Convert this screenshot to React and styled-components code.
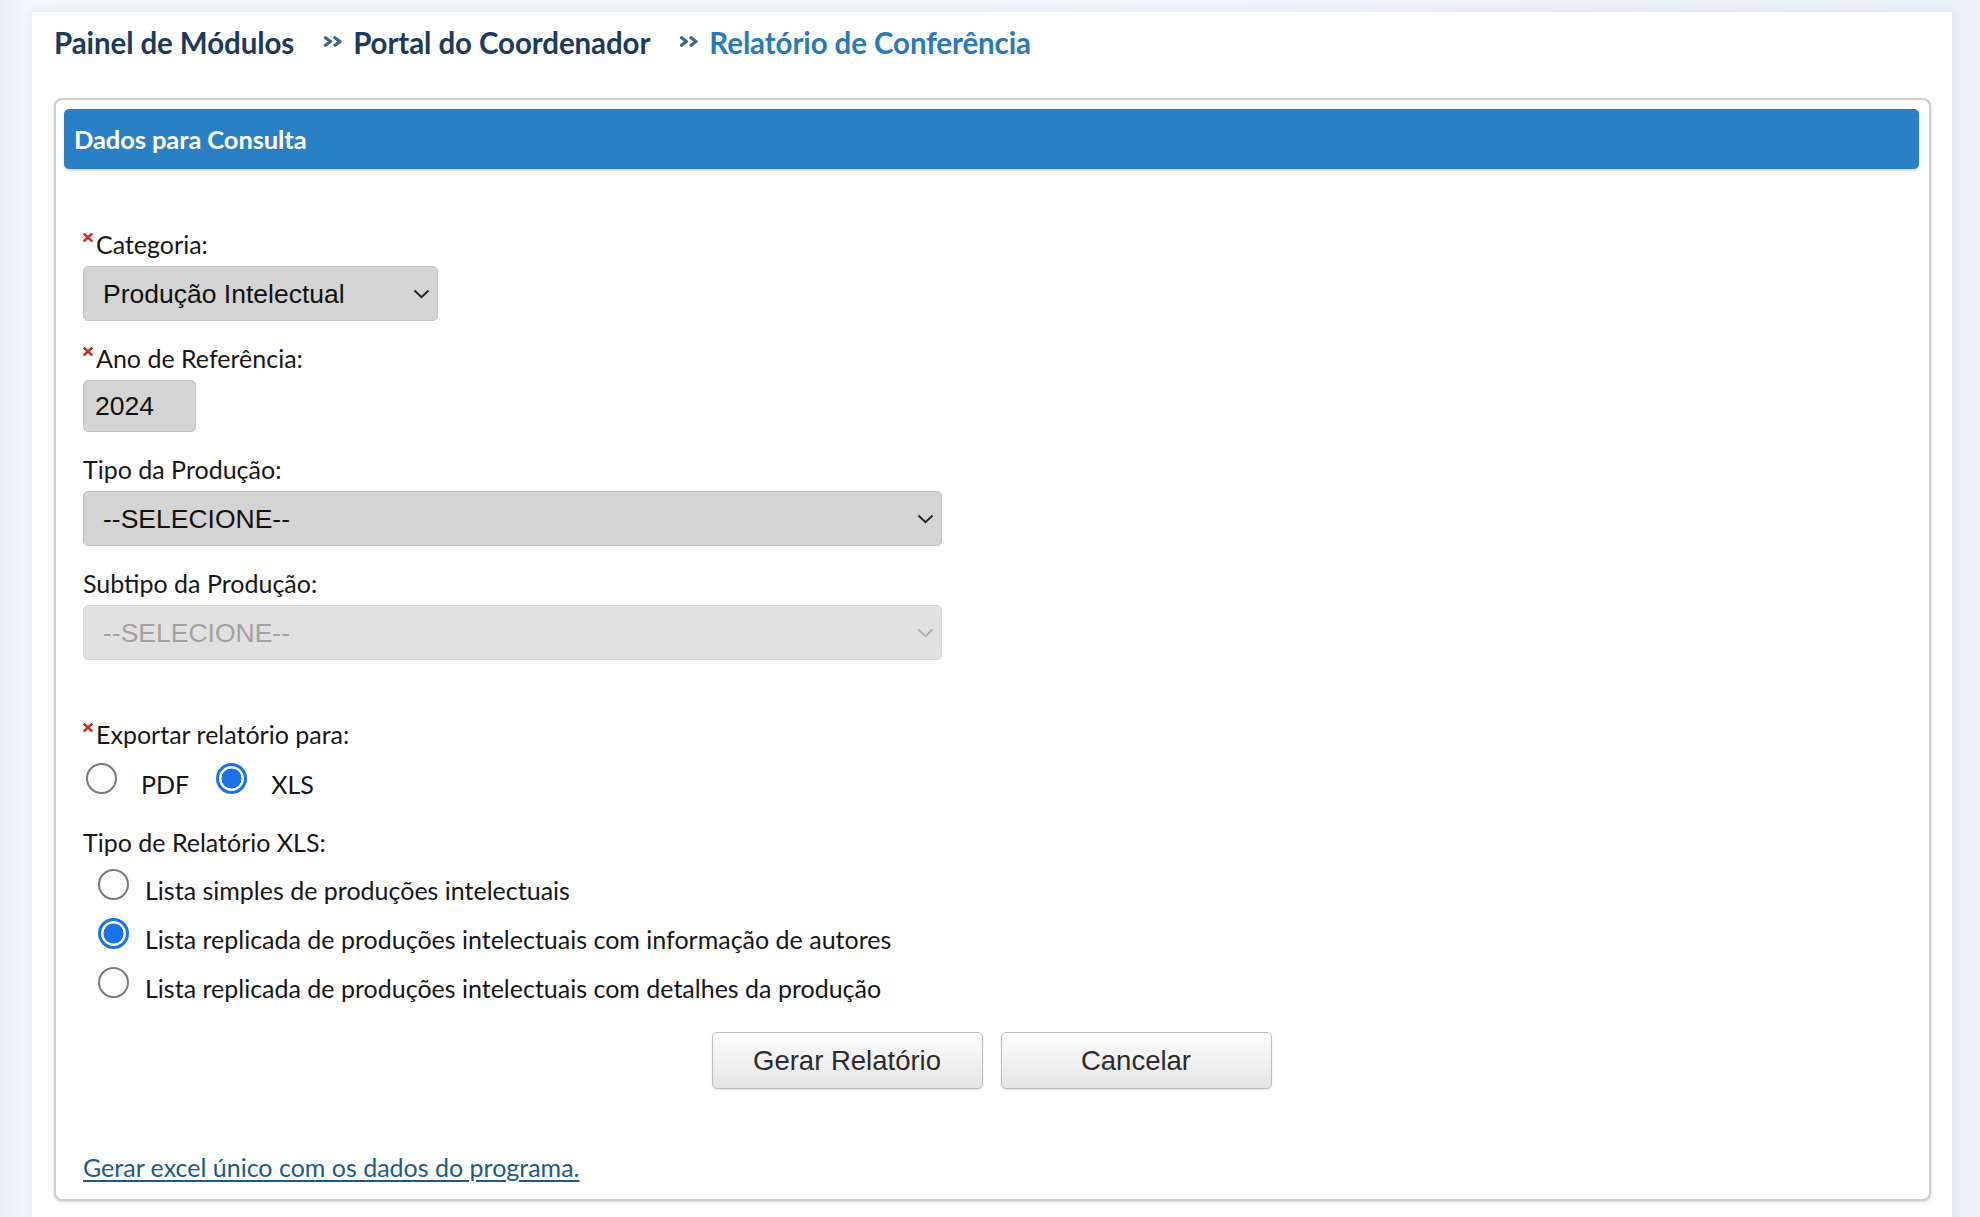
import styled, { createGlobalStyle } from 'styled-components'

const GlobalStyle = createGlobalStyle`
html, body { margin: 0; padding: 0; }
body {
  background: #eef3f9;
  font-family: Lato, "Open Sans", sans-serif;
  color: #161616;
}
* { box-sizing: border-box; }
`

const Page = styled.div`
height: 1217px;
overflow: hidden;
padding: 12px 28px 0 32px;
background: linear-gradient(90deg, #e6eef8 0, #f5f8fc 1.2%, #f3f7fb 50%, #ebf0f9 100%);
`

const Card = styled.div`
background: #fff;
min-height: 1300px;
padding: 0 21px 0 22px;
box-shadow: 0 0 10px rgba(160, 180, 210, 0.25);
`

const Breadcrumb = styled.nav`
height: 61px;
display: flex;
align-items: center;
font-weight: 700;
font-size: 29.5px;
letter-spacing: -0.1px;
color: #1c3b5b;
`

const Crumb = styled.span`
color: ${(p) => (p.$current ? '#2a79b9' : '#1c3b5b')};
white-space: nowrap;
`

const Sep = styled.svg`
margin: 0 9px 3px 29px;
flex: none;
`

const Panel = styled.section`
margin-top: 25px;
border: 2px solid #cdcdcd;
border-radius: 8px;
box-shadow: 0 1px 3px rgba(0, 0, 0, 0.18);
padding: 9px 10px 17px 8px;
`

const PanelHeader = styled.h3`
margin: 0;
height: 60px;
display: flex;
align-items: center;
padding-left: 10px;
background: #2a80c4;
border-radius: 5px;
box-shadow: 0 2px 2px rgba(0, 0, 0, 0.15);
color: #fff;
font-size: 25.5px;
font-weight: 700;
letter-spacing: -0.1px;
`

const FormArea = styled.div`
padding-left: 19px;
`

const Field = styled.div`
margin-top: ${(p) => p.$mt ?? 22}px;
`

const Label = styled.div`
font-size: 25px;
line-height: 30px;
color: #161616;
`

const Required = styled.svg`
vertical-align: top;
margin: 4px 3px 0 0;
`

const SelectBox = styled.div`
position: relative;
margin-top: 7px;
width: ${(p) => p.$w}px;
`

const Select = styled.select`
appearance: none;
display: block;
width: 100%;
height: 55px;
padding: 0 40px 0 19px;
font-family: "Liberation Sans", Arial, sans-serif;
font-size: 26.5px;
color: #111;
background: #d4d4d4;
border: 1px solid #c4c4c4;
border-radius: 5px;
outline: none;
&:disabled {
  background: #e1e1e1;
  color: #a2a2a2;
  border-color: #d8d8d8;
  opacity: 1;
}
`

const Arrow = styled.svg`
position: absolute;
right: 8px;
top: 50%;
margin-top: -5px;
pointer-events: none;
`

const YearInput = styled.input`
display: block;
margin-top: 7px;
width: 113px;
height: 52px;
padding: 0 11px;
font-family: "Liberation Sans", Arial, sans-serif;
font-size: 26.5px;
color: #111;
background: #d4d4d4;
border: 1px solid #c4c4c4;
border-radius: 5px;
outline: none;
`

const RadioRow = styled.div`
margin-top: ${(p) => p.$mt ?? 13}px;
padding-left: ${(p) => p.$indent ?? 0}px;
font-size: 25px;
line-height: 30px;
white-space: nowrap;
`

const RadioLabel = styled.label`
margin-left: ${(p) => p.$ml ?? 0}px;
`

const Radio = styled.input.attrs({ type: 'radio' })`
appearance: none;
display: inline-block;
vertical-align: baseline;
width: 31px;
height: 31px;
margin: 0 ${(p) => p.$gap ?? 24}px 0 0;
border-radius: 50%;
border: 2px solid #7a7a7a;
background: #fff;
&:checked {
  border: 3.5px solid #1a73e8;
  background: radial-gradient(circle closest-side, #1a73e8 0 78%, #fff 82%);
}
`

const ButtonBar = styled.div`
margin-top: 29px;
display: flex;
justify-content: center;
gap: 18px;
`

const Button = styled.button`
width: 271px;
height: 57px;
font-family: "Liberation Sans", Arial, sans-serif;
font-size: 27.5px;
color: #2b2b2b;
background: linear-gradient(#fdfdfd, #e5e5e5);
border: 1px solid #bcbcbc;
border-radius: 5px;
box-shadow: 0 1px 2px rgba(0, 0, 0, 0.12);
cursor: pointer;
`

const Footer = styled.div`
margin-top: 63px;
padding-left: 19px;
font-size: 25px;
line-height: 30px;
`

const ExcelLink = styled.a`
color: #1e5a87;
text-decoration: underline;
text-underline-offset: 3px;
`

function Star() {
  return (
    <Required width="10" height="9" viewBox="0 0 10 9">
      <path d="M1.6 1.4 L8.4 7.6 M8.4 1.4 L1.6 7.6" stroke="#c8312b" strokeWidth="2.6" strokeLinecap="square" />
    </Required>
  )
}

function Chevron({ color = '#222' }) {
  return (
    <Arrow width="17" height="10" viewBox="0 0 17 10">
      <path d="M1.5 1.5 L8.5 8.3 L15.5 1.5" fill="none" stroke={color} strokeWidth="1.9" />
    </Arrow>
  )
}

function Separator() {
  return (
    <Sep width="21" height="11" viewBox="0 0 21 11">
      <path d="M2.5 1.8 L7.5 5.5 L2.5 9.2 M12 1.8 L17 5.5 L12 9.2" fill="none" stroke="#45637f" strokeWidth="3.2" strokeLinecap="round" strokeLinejoin="round" />
    </Sep>
  )
}

const options = [
  'Lista simples de produções intelectuais',
  'Lista replicada de produções intelectuais com informação de autores',
  'Lista replicada de produções intelectuais com detalhes da produção',
]

export default function App() {
  return (
    <Page>
      <GlobalStyle />
      <Card>
        <Breadcrumb>
          <Crumb>Painel de Módulos</Crumb>
          <Separator />
          <Crumb>Portal do Coordenador</Crumb>
          <Separator />
          <Crumb $current>Relatório de Conferência</Crumb>
        </Breadcrumb>

        <Panel>
          <PanelHeader>Dados para Consulta</PanelHeader>

          <FormArea>
            <Field $mt={60}>
              <Label><Star />Categoria:</Label>
              <SelectBox $w={355}>
                <Select defaultValue="pi">
                  <option value="pi">Produção Intelectual</option>
                </Select>
                <Chevron />
              </SelectBox>
            </Field>

            <Field>
              <Label><Star />Ano de Referência:</Label>
              <YearInput defaultValue="2024" />
            </Field>

            <Field>
              <Label>Tipo da Produção:</Label>
              <SelectBox $w={859}>
                <Select defaultValue="">
                  <option value="">--SELECIONE--</option>
                </Select>
                <Chevron />
              </SelectBox>
            </Field>

            <Field>
              <Label>Subtipo da Produção:</Label>
              <SelectBox $w={859}>
                <Select defaultValue="" disabled>
                  <option value="">--SELECIONE--</option>
                </Select>
                <Chevron color="#b0b0b0" />
              </SelectBox>
            </Field>

            <Field $mt={59}>
              <Label><Star />Exportar relatório para:</Label>
              <RadioRow $mt={14}>
                <RadioLabel $ml={3}>
                  <Radio name="formato" value="pdf" />PDF
                </RadioLabel>
                <RadioLabel $ml={27}>
                  <Radio name="formato" value="xls" defaultChecked />XLS
                </RadioLabel>
              </RadioRow>
            </Field>

            <Field $mt={28}>
              <Label>Tipo de Relatório XLS:</Label>
              {options.map((text, i) => (
                <RadioRow key={text} $mt={i === 0 ? 12 : 13} $indent={15}>
                  <RadioLabel>
                    <Radio name="tipoXls" value={i} $gap={16} defaultChecked={i === 1} />
                    {text}
                  </RadioLabel>
                </RadioRow>
              ))}
            </Field>
          </FormArea>

          <ButtonBar>
            <Button type="button">Gerar Relatório</Button>
            <Button type="button">Cancelar</Button>
          </ButtonBar>

          <Footer>
            <ExcelLink href="#">Gerar excel único com os dados do programa.</ExcelLink>
          </Footer>
        </Panel>
      </Card>
    </Page>
  )
}
